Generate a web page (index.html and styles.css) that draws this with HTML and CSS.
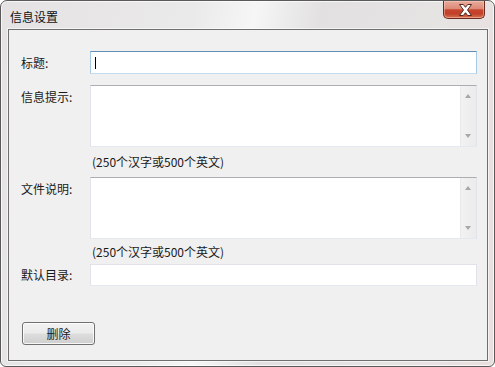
FILE: index.html
```html
<!DOCTYPE html>
<html lang="zh">
<head>
<meta charset="utf-8">
<title>信息设置</title>
<link rel="stylesheet" href="styles.css">
</head>
<body>
<div class="window">
  <div class="titlebar">
    <span class="title">信息设置</span>
    <div class="close">
      <svg width="15" height="12" viewBox="0 0 15 12">
        <path d="M1.5 0.5 H5.3 L7.5 3.3 L9.7 0.5 H13.5 L9.5 6 L13.5 11.5 H9.7 L7.5 8.7 L5.3 11.5 H1.5 L5.5 6 Z" fill="#ffffff" stroke="#55261d" stroke-width="1" stroke-linejoin="round"/>
      </svg>
    </div>
  </div>
  <div class="client">
    <div class="row row-input">
      <span class="label">标题:</span>
      <div class="field focused"><span class="caret"></span></div>
    </div>
    <div class="row row-area">
      <span class="label label-top">信息提示:</span>
      <div class="area">
        <div class="scroll"><span class="arrow up"></span><span class="arrow down"></span></div>
      </div>
    </div>
    <div class="hint">(250个汉字或500个英文)</div>
    <div class="row row-area">
      <span class="label label-top">文件说明:</span>
      <div class="area">
        <div class="scroll"><span class="arrow up"></span><span class="arrow down"></span></div>
      </div>
    </div>
    <div class="hint hint2">(250个汉字或500个英文)</div>
    <div class="row row-input row-dir">
      <span class="label">默认目录:</span>
      <div class="field field-dir"></div>
    </div>
    <div class="actions">
      <button class="btn">删除</button>
    </div>
  </div>
</div>
</body>
</html>
```

FILE: styles.css
```css
html, body {
  margin: 0;
  padding: 0;
  background: #ffffff;
}
body {
  width: 495px;
  height: 367px;
  overflow: hidden;
  font-family: "Noto Sans CJK SC", "Microsoft YaHei", sans-serif;
  font-size: 12px;
  color: #1a1a1a;
}
.window {
  box-sizing: border-box;
  width: 495px;
  height: 367px;
  border: 1px solid #5a5a5a;
  border-radius: 7px 7px 6px 6px;
  background: linear-gradient(100deg, #e4e2e2 0%, #ebeaea 35%, #f6f6f6 46%, #e2e0e0 58%, #e6e3e3 80%, #eadfdf 100%);
  box-shadow: inset 0 0 0 1px rgba(255,255,255,0.7);
  padding: 0 6px 5px 7px;
  display: flex;
  flex-direction: column;
}
.titlebar {
  height: 28px;
  flex: none;
  display: flex;
  align-items: flex-start;
  justify-content: space-between;
}
.title {
  margin: 8px 0 0 2px;
  font-size: 12px;
  line-height: 16px;
  color: #111;
}
.close {
  width: 42px;
  height: 18px;
  margin-right: 3px;
  box-sizing: border-box;
  border: 1px solid #6b2b22;
  border-top: none;
  border-radius: 0 0 5px 5px;
  background: linear-gradient(#e9ab9c 0%, #dd8a77 45%, #c8452e 52%, #c1402a 75%, #d8734f 100%);
  box-shadow: inset 0 0 0 1px rgba(255,210,200,0.45);
  display: flex;
  align-items: center;
  justify-content: center;
}
.close svg {
  display: block;
  margin-left: 2px;
}
.client {
  flex: 1;
  border: 1px solid #6f6f6f;
  background: #f0f0f0;
  box-shadow: 0 0 0 1px rgba(255,255,255,0.6);
  padding: 21px 10px 0 12px;
  display: flex;
  flex-direction: column;
}
.row {
  display: flex;
}
.row-input {
  align-items: center;
}
.label {
  width: 69px;
  flex: none;
  line-height: 16px;
  color: #1a1a1a;
}
.label-top {
  padding-top: 4px;
}
.field {
  flex: 1;
  box-sizing: border-box;
  height: 23px;
  background: #ffffff;
  border: 1px solid;
  border-color: #abadb3 #e2e3ea #e3e9ef #e2e3ea;
  display: flex;
  align-items: center;
}
.field.focused {
  border-color: #5d8fb8 #a7c9e4 #c3dbee #a7c9e4;
}
.caret {
  width: 1px;
  height: 12px;
  margin-left: 4px;
  background: #000;
}
.row-area {
  margin-top: 11px;
}
.hint + .row-area {
  margin-top: 0;
}
.area {
  flex: 1;
  box-sizing: border-box;
  height: 62px;
  background: #ffffff;
  border: 1px solid;
  border-color: #abadb3 #e2e3ea #e3e9ef #e2e3ea;
  display: flex;
  justify-content: flex-end;
}
.scroll {
  width: 16px;
  box-sizing: border-box;
  border-left: 1px solid #e9e9e9;
  background: linear-gradient(90deg, #f2f2f2, #ebebeb);
  position: relative;
}
.arrow {
  position: absolute;
  left: 4px;
  width: 0;
  height: 0;
  border-left: 3.5px solid transparent;
  border-right: 3.5px solid transparent;
}
.arrow.up {
  top: 8px;
  border-bottom: 4px solid #a8a8a8;
}
.arrow.down {
  bottom: 8px;
  border-top: 4px solid #a8a8a8;
}
.hint {
  height: 30px;
  line-height: 30px;
  padding-left: 71px;
  color: #1a1a1a;
}
.hint2 {
  height: 25px;
  line-height: 26px;
}
.field-dir {
  height: 22px;
  border-color: #e2e3ea #e2e3ea #e3e9ef #e2e3ea;
}
.actions {
  margin-top: 36px;
  padding-left: 1px;
}
.btn {
  width: 73px;
  height: 23px;
  margin: 0;
  padding: 0;
  box-sizing: border-box;
  border: 1px solid #707070;
  border-radius: 3px;
  background: linear-gradient(#f2f2f2 0%, #ebebeb 48%, #dddddd 52%, #cfcfcf 100%);
  box-shadow: inset 0 0 0 1px rgba(255,255,255,0.8);
  font-family: "Noto Sans CJK SC", "Microsoft YaHei", sans-serif;
  font-size: 12px;
  color: #1a1a1a;
  line-height: 16px;
}
```
